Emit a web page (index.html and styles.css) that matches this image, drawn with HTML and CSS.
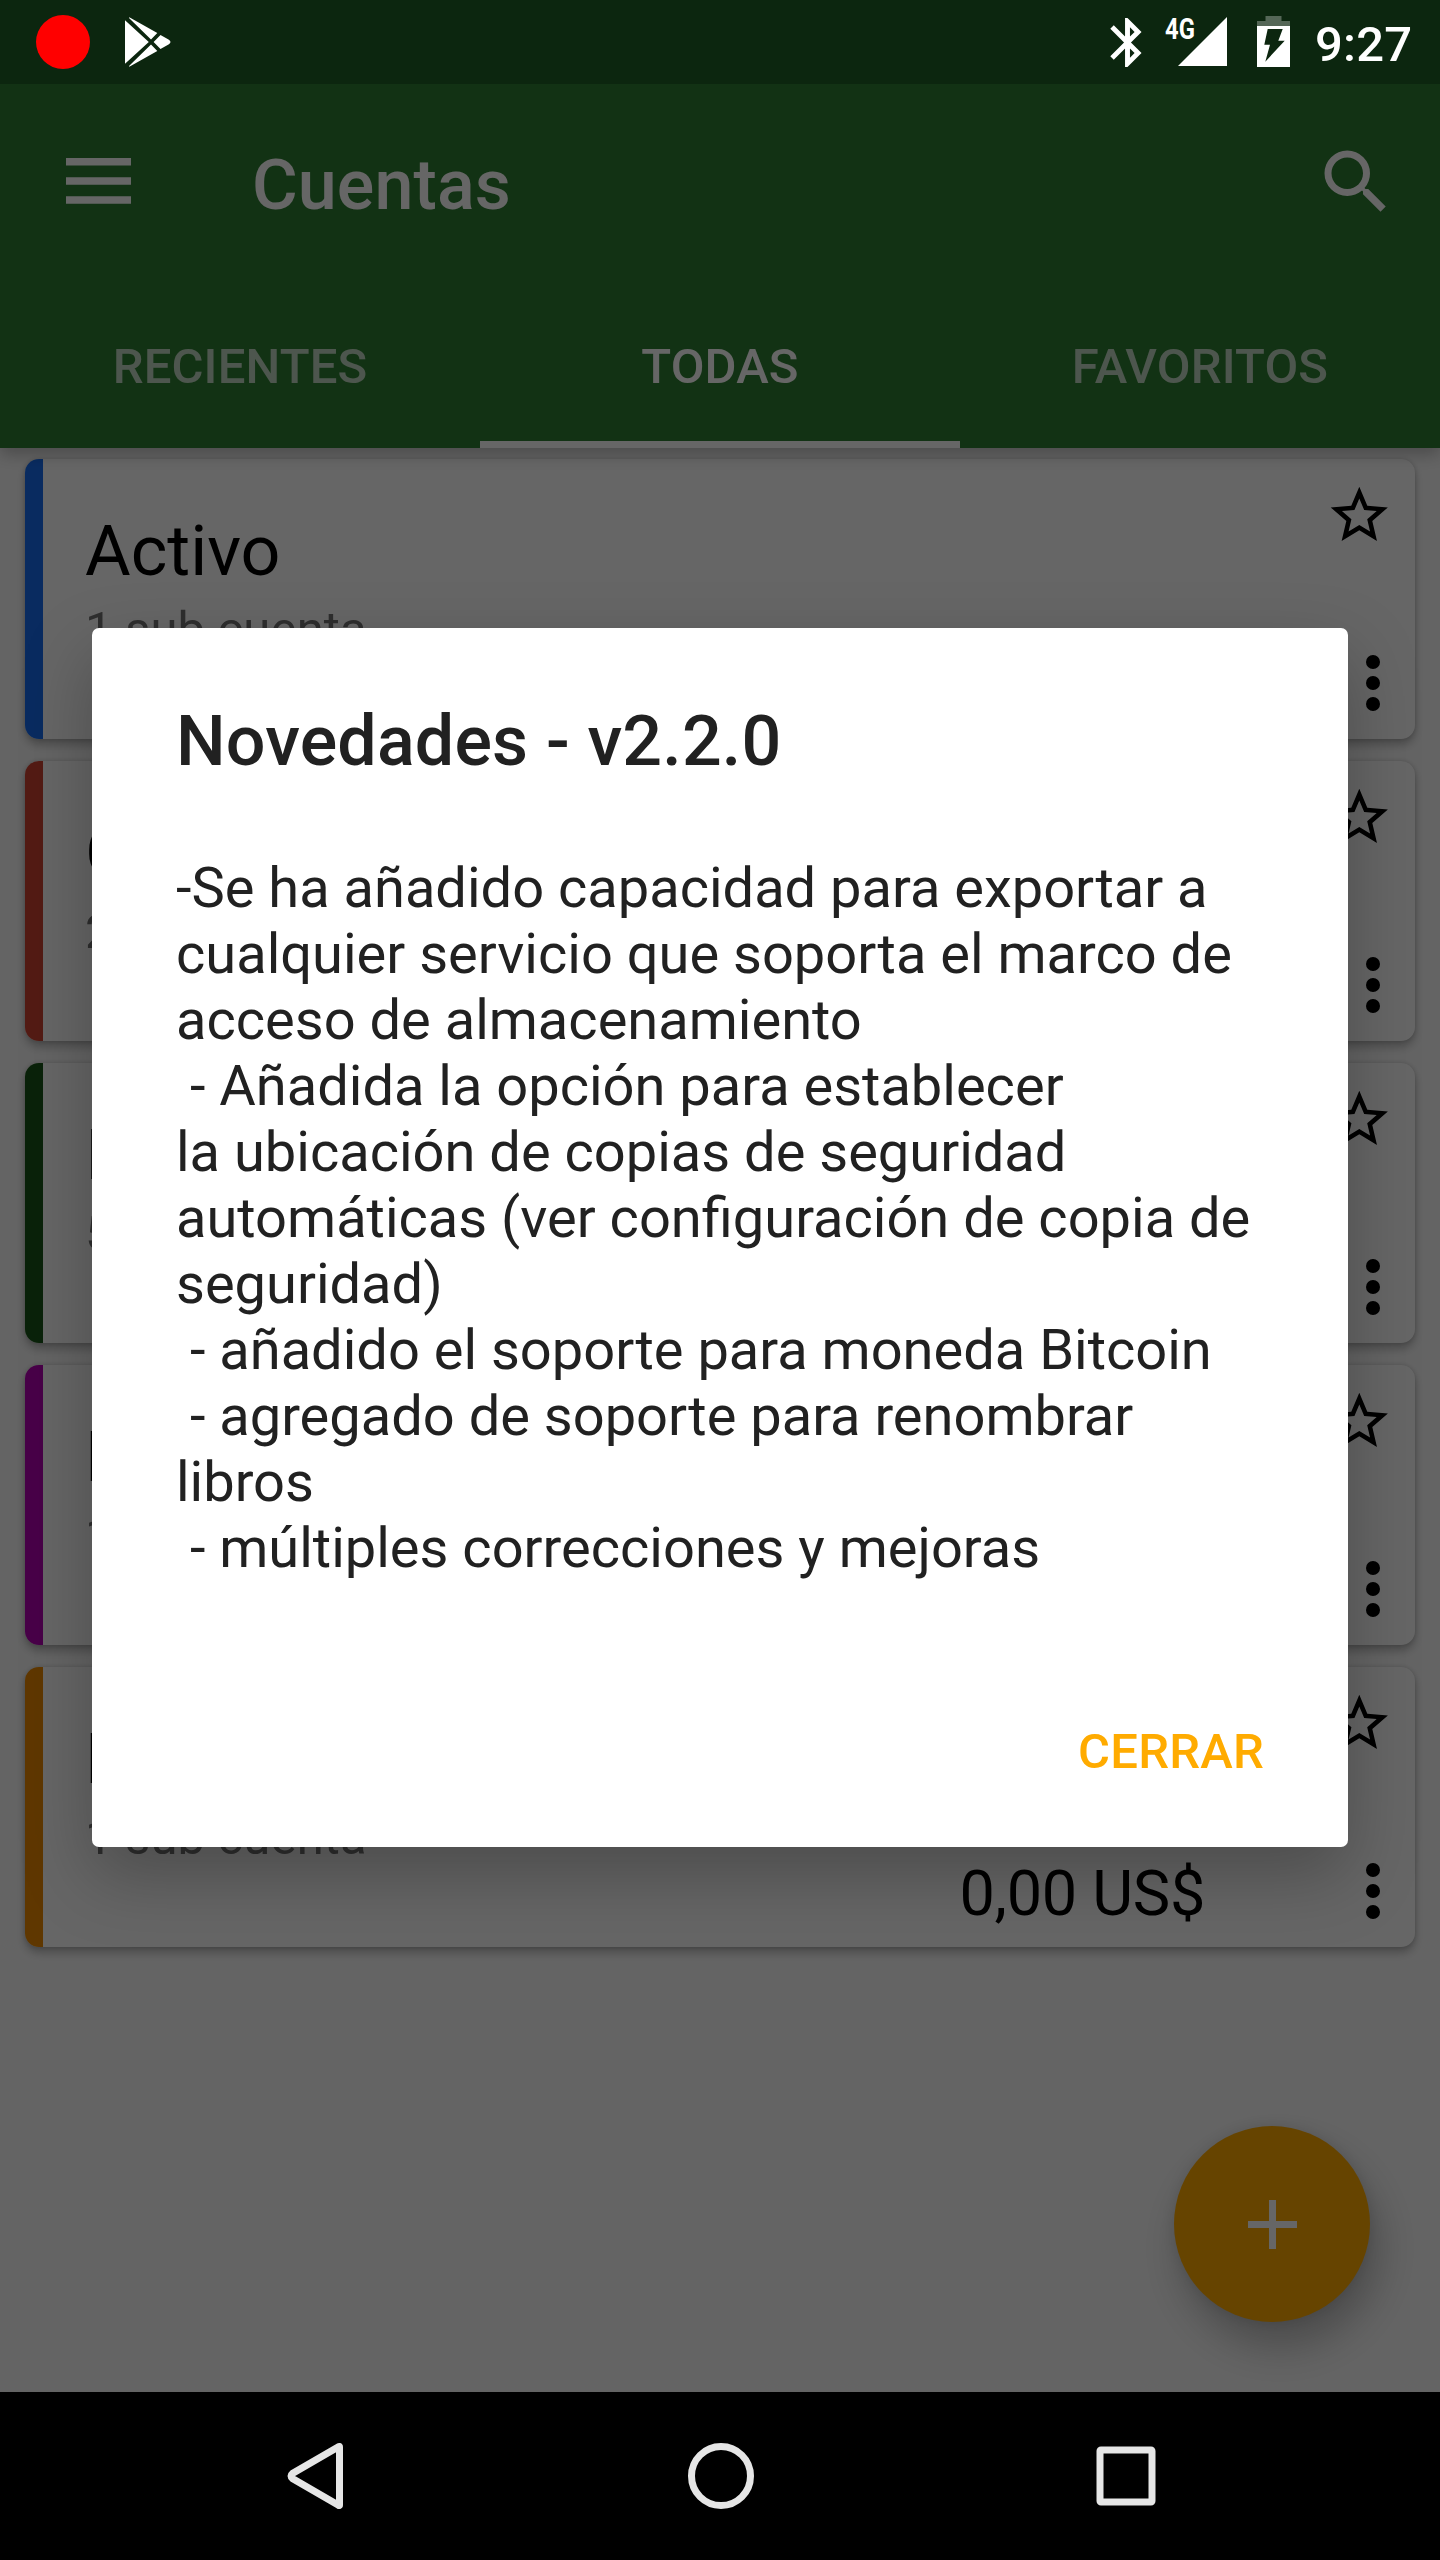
FILE: index.html
```html
<!DOCTYPE html>
<html lang="es">
<head>
<meta charset="utf-8">
<title>Cuentas</title>
<link rel="stylesheet" href="styles.css">
</head>
<body>
<svg class="defs" width="0" height="0" aria-hidden="true">
  <symbol id="star" viewBox="0 0 24 24"><path d="M22 9.24l-7.19-.62L12 2 9.19 8.63 2 9.24l5.46 4.73L5.82 21 12 17.27 18.18 21l-1.63-7.03L22 9.24zM12 15.4l-3.76 2.27 1-4.28-3.32-2.88 4.38-.38L12 6.1l1.71 4.04 4.38.38-3.32 2.88 1 4.28L12 15.4z"/></symbol>
  <symbol id="more" viewBox="0 0 24 24"><circle cx="12" cy="6" r="2"/><circle cx="12" cy="12" r="2"/><circle cx="12" cy="18" r="2"/></symbol>
</svg>
<div class="screen">
  <div class="app">
    <header class="appbar">
      <div class="status-space"></div>
      <div class="toolbar">
        <svg class="menu-icon" width="65" height="46" viewBox="0 0 65 46"><path d="M0 0h65v7.500H0zM0 19.200h65v7.500H0zM0 38.300h65v7.500H0z"/></svg>
        <h1 class="toolbar-title">Cuentas</h1>
        <svg class="search-icon" width="84" height="84" viewBox="0 0 24 24"><path d="M15.500 14h-.79l-.28-.27A6.471 6.471 0 0 0 16 9.500 6.500 6.500 0 1 0 9.500 16c1.610 0 3.090-.59 4.230-1.570l.27.28v.79l5 4.990L20.490 19l-4.990-5zm-6 0C7.010 14 5 11.990 5 9.500S7.010 5 9.500 5 14 7.010 14 9.500 11.990 14 9.500 14z"/></svg>
      </div>
      <nav class="tabs">
        <span class="tab">RECIENTES</span>
        <span class="tab tab-active">TODAS</span>
        <span class="tab">FAVORITOS</span>
      </nav>
    </header>
    <main class="accounts">
      <article class="card">
        <div class="strip blue"></div>
        <div class="info"><h2 class="name">Activo</h2><p class="sub">1 sub cuenta</p></div>
        <div class="actions"><svg class="star"><use href="#star"/></svg><svg class="more"><use href="#more"/></svg></div>
      </article>
      <article class="card">
        <div class="strip red"></div>
        <div class="info"><h2 class="name">Gastos</h2><p class="sub">2 sub cuentas</p></div>
        <div class="actions"><svg class="star"><use href="#star"/></svg><svg class="more"><use href="#more"/></svg></div>
      </article>
      <article class="card">
        <div class="strip green"></div>
        <div class="info"><h2 class="name">Ingresos</h2><p class="sub">5 sub cuentas</p></div>
        <div class="actions"><svg class="star"><use href="#star"/></svg><svg class="more"><use href="#more"/></svg></div>
      </article>
      <article class="card">
        <div class="strip purple"></div>
        <div class="info"><h2 class="name">Pasivo</h2><p class="sub">1 sub cuenta</p></div>
        <div class="actions"><svg class="star"><use href="#star"/></svg><svg class="more"><use href="#more"/></svg></div>
      </article>
      <article class="card">
        <div class="strip orange"></div>
        <div class="info"><h2 class="name">Patrimonio</h2><p class="sub">1 sub cuenta</p><p class="amount">0,00 US$</p></div>
        <div class="actions"><svg class="star"><use href="#star"/></svg><svg class="more"><use href="#more"/></svg></div>
      </article>
    </main>
    <button class="fab" aria-label="Añadir"><svg width="49" height="49" viewBox="0 0 49 49"><path d="M21 0h7v21h21v7H28v21h-7V28H0v-7h21z"/></svg></button>
  </div>

  <div class="scrim"></div>

  <div class="statusbar">
    <svg class="record" width="54" height="54" viewBox="0 0 54 54"><circle cx="27" cy="27" r="27"/></svg>
    <svg class="play" width="46" height="50" viewBox="125 17 46 50"><path d="M125 20.300L148.800 42 125 63.700zM129.300 17.200L157.300 33 151 39.500 129 18zM129.300 66.800L157.300 51 151 44.500 129 66zM153.600 42l6.900-7 8 4.500q4 2.500 0 5l-8 4.500z"/></svg>
    <svg class="bluetooth" width="59" height="59" viewBox="0 0 24 24"><path d="M17.710 7.710L12 2h-1v7.590L6.410 5 5 6.410 10.590 12 5 17.590 6.410 19 11 14.410V22h1l5.710-5.710-4.300-4.290 4.300-4.290zM13 5.830l1.880 1.880L13 9.590V5.830zm1.880 10.460L13 18.170v-3.760l1.880 1.880z"/></svg>
    <span class="network">4G</span>
    <svg class="signal" width="49" height="49" viewBox="0 0 49 49"><path d="M0 49L49 0v49z"/></svg>
    <svg class="battery" width="33" height="51" viewBox="1257 16 33 51"><path opacity=".3" d="M1265.500 16h16v5h8.500v5h-33v-5h8.500z"/><path fill-rule="evenodd" d="M1257 26h33v41h-33zM1267.700 29l-3.400 15.700h5.700l-4.700 17 19.400-21h-6.400l4.400-11.700z"/></svg>
    <span class="clock">9:27</span>
  </div>

  <section class="dialog" role="dialog">
    <h2 class="dialog-title">Novedades - v2.2.0</h2>
    <p class="dialog-text">-Se ha añadido capacidad para exportar a
cualquier servicio que soporta el marco de
acceso de almacenamiento
 - Añadida la opción para establecer
la ubicación de copias de seguridad
automáticas (ver configuración de copia de
seguridad)
 - añadido el soporte para moneda Bitcoin
 - agregado de soporte para renombrar
libros
 - múltiples correcciones y mejoras</p>
    <div class="dialog-actions"><button class="dialog-button">CERRAR</button></div>
  </section>

  <footer class="navbar">
    <svg width="66" height="74" viewBox="0 0 66 74"><path d="M58.500 8v58q0 1-1 .3L11.500 39.500q-3-2.500 0-5L57.500 7.700q1-.7 1 .3z"/></svg>
    <svg class="home" width="74" height="74" viewBox="0 0 74 74"><circle cx="37" cy="37" r="29.500"/></svg>
    <svg width="74" height="74" viewBox="0 0 74 74"><rect x="11" y="11" width="52" height="52" rx="1"/></svg>
  </footer>
</div>
</body>
</html>
```
FILE: styles.css
```css
* { box-sizing: border-box; margin: 0; padding: 0; }

body { background: #000; font-family: Roboto, "Noto Sans", sans-serif; }

button { border: 0; background: none; font: inherit; }

svg { display: block; flex: none; }

.defs { position: absolute; }

.screen {
  position: relative;
  display: flex;
  flex-direction: column;
  width: 1440px;
  height: 2560px;
  overflow: hidden;
}

.app {
  position: relative;
  isolation: isolate;
  flex: 1;
  display: flex;
  flex-direction: column;
  background: #fafafa;
  overflow: hidden;
}

.appbar {
  position: relative;
  z-index: 1;
  background: #2e7d32;
  color: #fff;
  box-shadow: 0 6px 16px rgba(0, 0, 0, .26);
}

.status-space { height: 84px; background: #205f26; }

.toolbar { display: flex; height: 196px; padding: 0 42px 0 66px; }
.toolbar svg { fill: #fff; }
.menu-icon { margin-top: 74px; }
.toolbar-title {
  flex: 1;
  padding: 3px 0 0 121px;
  font-size: 70px;
  font-weight: 500;
  line-height: 196px;
  letter-spacing: .1px;
}
.search-icon { margin-top: 56px; }

.tabs { display: grid; grid-template-columns: repeat(3, 1fr); height: 168px; }
.tab {
  padding-top: 3px;
  height: 168px;
  font-size: 49px;
  font-weight: 500;
  line-height: 168px;
  letter-spacing: .15px;
  text-align: center;
  color: rgba(255, 255, 255, .7);
}
.tab-active { color: #fff; box-shadow: inset 0 -7px #fff; }

.accounts {
  display: flex;
  flex-direction: column;
  gap: 22px;
  padding: 11px 25px;
}
.card {
  display: flex;
  height: 280px;
  border-radius: 14px;
  background: #fff;
  box-shadow: 0 6px 9px rgba(0, 0, 0, .24), 0 0 5px rgba(0, 0, 0, .16);
}
.strip { width: 18px; border-radius: 14px 0 0 14px; }
.blue { background: #186df0; }
.red { background: #d04433; }
.green { background: #1b5519; }
.purple { background: #b300b3; }
.orange { background: #ed8900; }

.info { flex: 1; padding: 51px 0 0 42px; color: #000; }
.name { font-size: 70px; font-weight: 400; line-height: 82px; }
.sub { margin-top: 9px; font-size: 49px; line-height: 57px; letter-spacing: .15px; color: #737373; }
.amount { font-size: 63px; line-height: 56px; letter-spacing: -.3px; text-align: right; }

.actions { width: 210px; padding: 22px 0 0 120px; }
.star { width: 68.600px; height: 68.600px; }
.more { width: 84px; height: 84px; margin: 91px 0 0 6px; }

.fab {
  position: absolute;
  right: 70px;
  bottom: 70px;
  display: flex;
  align-items: center;
  justify-content: center;
  width: 196px;
  height: 196px;
  border-radius: 50%;
  background: #fa0;
  box-shadow: 8px 24px 42px rgba(0, 0, 0, .26), 0 0 14px rgba(0, 0, 0, .1);
}
.fab svg { fill: #fff; }

.scrim { position: absolute; inset: 0 0 168px; background: rgba(0, 0, 0, .6); }

.statusbar {
  position: absolute;
  top: 0;
  left: 0;
  display: flex;
  width: 1440px;
  height: 84px;
  padding-left: 36px;
  color: #fff;
  fill: #fff;
}
.record { margin-top: 15px; fill: red; }
.play { margin: 17px 0 0 35px; }
.bluetooth { margin: 13px 0 0 927px; }
.network {
  width: 21px;
  margin: 10px 0 0 8px;
  font-size: 29px;
  font-weight: 700;
  line-height: 38px;
  white-space: nowrap;
  transform: scaleX(.82);
  transform-origin: left;
}
.signal { margin: 17px 0 0 -8px; }
.battery { margin: 16px 0 0 30px; }
.clock { margin-left: 25px; font-size: 49px; font-weight: 500; line-height: 89px; letter-spacing: .2px; }

.dialog {
  position: absolute;
  top: 628px;
  left: 92px;
  width: 1256px;
  height: 1219px;
  padding: 72px 84px 0;
  border-radius: 7px;
  background: #fff;
  color: #212121;
  box-shadow: 0 28px 70px rgba(0, 0, 0, .26);
}
.dialog-title { font-size: 70px; font-weight: 500; line-height: 82px; letter-spacing: .17px; }
.dialog-text { margin-top: 73px; font-size: 56px; line-height: 66px; white-space: pre; }
.dialog-actions { display: flex; justify-content: flex-end; margin-top: 142px; }
.dialog-button { font-size: 49px; font-weight: 500; line-height: 57px; letter-spacing: .2px; color: #ffab00; }

.navbar {
  position: relative;
  display: flex;
  justify-content: space-between;
  align-items: center;
  height: 168px;
  padding: 0 277px 0 281px;
  background: #000;
}
.navbar svg { fill: none; stroke: #e6e6e6; stroke-width: 7px; }
.home { margin-left: 5px; }
```
